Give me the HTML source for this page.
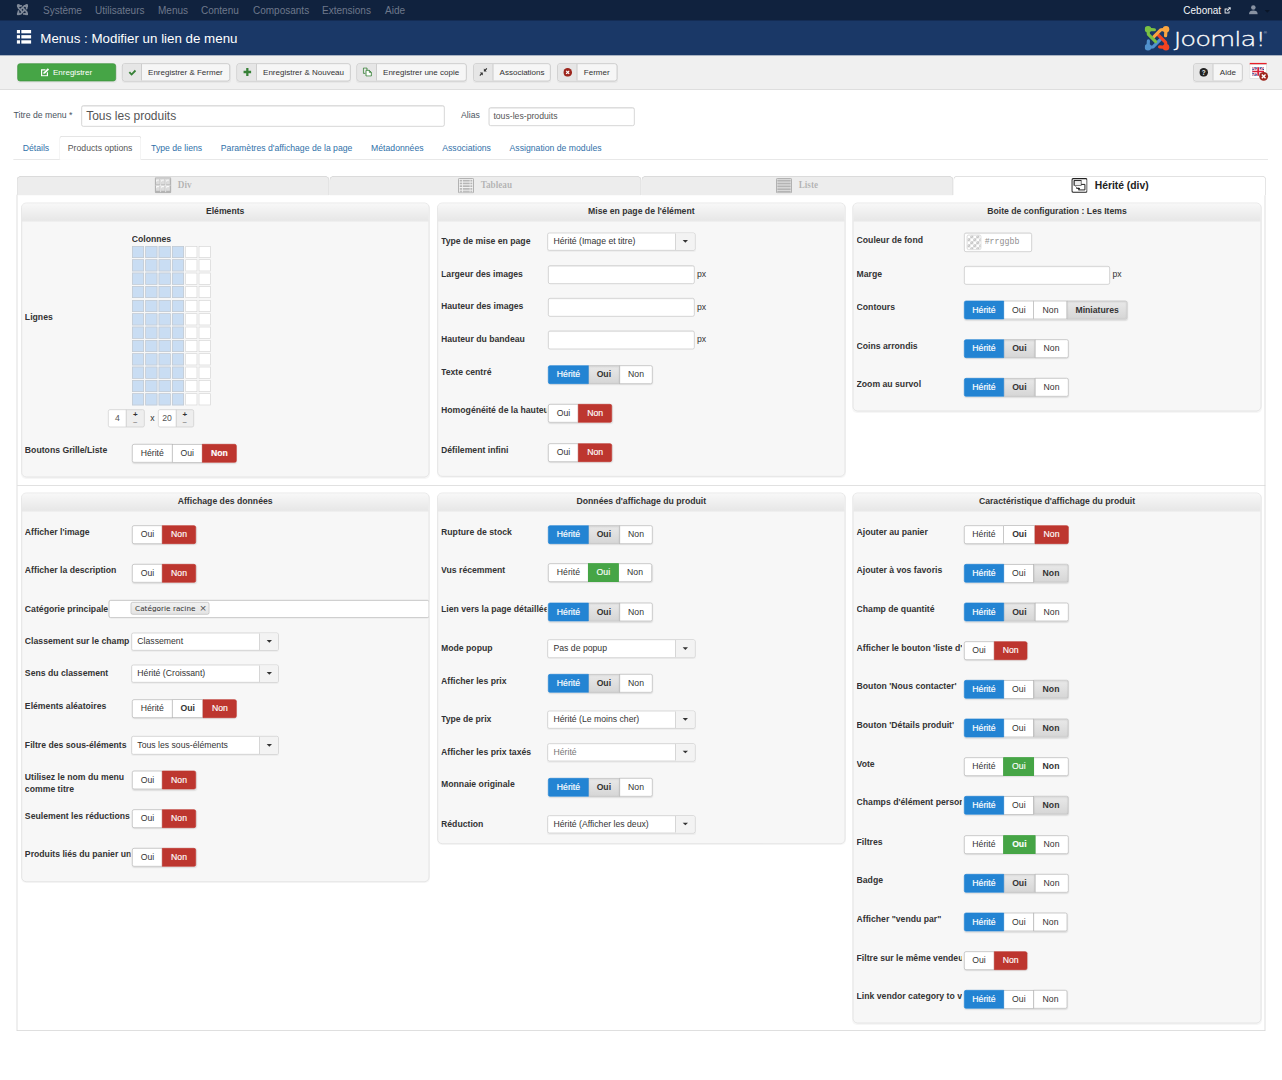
<!DOCTYPE html>
<html lang="fr"><head><meta charset="utf-8"><title>Menus : Modifier un lien de menu</title>
<style>
*{box-sizing:border-box;margin:0;padding:0}
html,body{width:1282px;height:1080px;overflow:hidden;background:#fff}
body{font-family:"Liberation Sans",Arial,sans-serif;font-size:13px;line-height:18px;color:#333}
#s{position:absolute;left:0;top:0;width:1923px;height:1620px;transform:scale(0.666667);transform-origin:0 0;overflow:hidden;background:#fff}
.abs{position:absolute}
.navbar{position:absolute;left:0;top:0;width:1923px;height:31px;background:#10223e}
.navbar .it{position:absolute;top:6.8px;font-size:15px;line-height:18px;color:#6e788b;white-space:nowrap}
.header{position:absolute;left:0;top:31px;width:1923px;height:52px;background:#1a3867}
.header h1{position:absolute;left:60.5px;top:14px;font-size:20px;line-height:24px;font-weight:normal;color:#fff;white-space:nowrap}
.subhead{position:absolute;left:0;top:83px;width:1923px;height:51.5px;background:#f0f0f0;border-bottom:1px solid #d6d6d6}
.tb{position:absolute;top:12.3px;height:27.2px;border:1px solid #bcbcbc;border-radius:4px;background:#f6f6f6;font-size:12px;line-height:25.2px;color:#333;white-space:nowrap;overflow:hidden;box-shadow:0 1px 1px rgba(0,0,0,.04)}
.tb .ic{position:absolute;left:0;top:0;width:29px;height:100%;background:#e6e6e6;border-right:1px solid #c0c0c0}
.tb .tx{position:absolute;left:38.5px;top:0}
.tb svg{position:absolute}
.tb.green{background:#46a546;border-color:#3b8f3b;color:#fff}
label.h{position:absolute;font-size:13px;line-height:18px;color:#4a5460;white-space:nowrap}
.inp{position:absolute;background:#fff;border:1px solid #c3c3c3;border-radius:3px;box-shadow:inset 0 1px 1px rgba(0,0,0,.075);white-space:nowrap;overflow:hidden;color:#555}
.tabs{position:absolute;left:20px;top:204.3px;width:1882px;height:36px;border-bottom:1px solid #ddd}
.tabs .t{position:absolute;top:0;height:36px;padding:8px 12px 0 12px;border:1px solid transparent;border-radius:4px 4px 0 0;color:#3071a9;font-size:13px;line-height:18px;white-space:nowrap}
.tabs .t.act{border-color:#ddd;border-bottom-color:#fff;background:#fff;color:#555}
.st{position:absolute;top:263.5px;height:29.4px;background:#ededed;border:1px solid #d3d3d3;border-bottom:0;border-radius:7px 7px 0 0;font-family:"Liberation Serif",serif;font-weight:bold;font-size:13.8px;color:#b3b3b3;text-shadow:0 1px 0 #fff;line-height:26.5px;white-space:nowrap}
.st.act{line-height:27px;text-shadow:none;background:#fff;border-color:#d9d9d9;font-family:"Liberation Sans",Arial,sans-serif;font-size:15.5px;color:#222;border-radius:6px 6px 0 0}
.st span{position:absolute;top:-0.6px;transform:scaleY(1.16);transform-origin:50% 55%}
.st.act span{transform:none;top:0}
.st svg{position:absolute}
.box{position:absolute;left:25.3px;top:292.4px;width:1873px;height:1253.2px;border:1px solid #d0d0d0;border-top:0;background:#fff}
.hr{position:absolute;left:26px;top:727.9px;width:1872px;height:1px;background:#d2d2d2}
.pn{position:absolute;width:612px;background:#f7f7f7;border:1px solid #dcdcdc;border-radius:7.5px;overflow:hidden;box-shadow:0 1px 1px rgba(0,0,0,.04)}
.pn .hd{position:absolute;left:0;top:0;right:0;height:27.5px;background:linear-gradient(#f8f8f8,#e7e7e7);border-bottom:1px solid #e0e0e0;text-align:center;font-weight:bold;font-size:13px;line-height:24.8px;color:#333}
.lb{position:absolute;left:4.8px;width:158.7px;font-weight:bold;font-size:13px;line-height:18px;color:#333;white-space:nowrap;overflow:hidden}
.lb.w{white-space:normal;width:156px}
.bg{position:absolute;left:165.5px;height:28px;white-space:nowrap;font-size:0;border-radius:4px;box-shadow:0 1px 2px rgba(0,0,0,.1)}
.bg b,.bg i{position:relative;display:inline-block;height:28px;border:1px solid #b3b3b3;margin-left:-1px;background:#fff;font-size:13px;line-height:26px;text-align:center;color:#333;font-style:normal;font-weight:normal;vertical-align:top}
.bg b{font-weight:bold}
.bg :first-child{margin-left:0;border-radius:3px 0 0 3px}
.bg :last-child{border-radius:0 3px 3px 0}
.bg .H{width:60.7px}.bg .O{width:46.2px}.bg .N{width:50.8px}.bg .M{width:91px}
.bg b.O{width:47.7px}.bg b.N{width:52.3px}
.bg .blue{z-index:2;background:#2384d3;border-color:#2384d3;color:#fff;-webkit-text-stroke:0.25px #fff}
.bg .red{z-index:2;background:#bd362f;border-color:#bd362f;color:#fff;-webkit-text-stroke:0.2px #fff}
.bg .grn{z-index:2;background:#46a546;border-color:#46a546;color:#fff;-webkit-text-stroke:0.2px #fff}
.bg .gry{z-index:1;background:linear-gradient(#e9e9e9,#d6d6d6);border-color:#bbb;box-shadow:inset 0 1px 3px rgba(0,0,0,.12)}
.sel{position:absolute;left:164.7px;width:221.2px;height:27.4px;background:#fff;border:1px solid #c6c6c6;border-radius:3px;font-size:13px;line-height:25.4px;color:#333;white-space:nowrap;overflow:hidden;box-shadow:0 1px 1px rgba(0,0,0,.04)}
.sel span{position:absolute;left:7.8px;top:-0.5px}
.sel i{position:absolute;right:0;top:0;width:28.6px;height:100%;background:#f3f3f3;border-left:1px solid #c6c6c6}
.sel i:after{content:"";position:absolute;left:9.8px;top:10.6px;border:4.2px solid transparent;border-top:4.6px solid #333;border-bottom:0}
.ti{left:164.8px;width:220.2px;height:28px}
.px{position:absolute;left:388.6px;font-size:13px;line-height:18px;color:#333}

.grid{position:absolute;width:120px;height:242px}
.grid .c{position:absolute;width:18px;height:18px;background:#fff;border:1px solid #d4d4d4}
.grid .c.b{background:#c9ddf3;border-color:#c3c8ce}
.cnt{position:absolute;width:54.7px;height:27.4px}
.cnt .cv{position:absolute;left:0;top:0;width:28px;height:27.4px;background:#fff;border:1px solid #ccc;border-radius:3px 0 0 3px;text-align:center;font-size:13px;line-height:25px;color:#555}
.cnt .cb{position:absolute;left:27px;top:0;width:27.7px;height:27.4px;background:#eee;border:1px solid #ccc;border-radius:0 3px 3px 0;font-size:12px;color:#333;text-align:center}
.cnt .pl{position:absolute;left:0;right:0;top:-1.7px;line-height:16px;font-weight:bold}
.cnt .mi{position:absolute;left:0;right:0;top:10.6px;line-height:16px;color:#777}
.chk{position:absolute;left:2.5px;top:2.5px;width:22.5px;height:22.5px;border-radius:3px;background-color:#fff;background-image:linear-gradient(45deg,#c6c6c6 25%,transparent 25%,transparent 75%,#c6c6c6 75%),linear-gradient(45deg,#c6c6c6 25%,transparent 25%,transparent 75%,#c6c6c6 75%);background-size:9px 9px;background-position:0 0,4.5px 4.5px;border:1px solid #d2d2d2}
.mono{position:absolute;left:30px;top:4px;font-family:"Liberation Mono","DejaVu Sans Mono",monospace;font-size:12.4px;line-height:18px;color:#8f8f8f}
.tag{position:absolute;left:34px;top:2.5px;height:19px;padding:0 19.5px 0 5.5px;background:linear-gradient(#f1f1f1,#e4e4e4);border:1px solid #b4b4b4;border-radius:3px;font-family:"DejaVu Sans",Verdana,sans-serif;font-size:10.95px;line-height:17px;color:#333}
.tag em{position:absolute;right:3.2px;top:-0.3px;font-style:normal;font-size:17px;color:#555;font-family:"Liberation Sans",sans-serif}
</style></head>
<body><div id="s">
<div class="abs" style="left:0;top:0;width:1923px;height:84px;background:#1a3867"></div><div class="navbar"><svg class="abs" style="left:24.6px;top:5.8px" width="17.6" height="17.6" viewBox="0 0 37 37"><g fill="none" stroke="#808a99" stroke-linecap="round" stroke-linejoin="round" stroke-width="5.4"><path d="M5 5.2 L5.6 12.6 L16.4 23.4 M5 5 L14.6 5.6" transform="rotate(270 18.5 18.5)"/><path d="M5 5.2 L5.6 12.6 L16.4 23.4 M5 5 L14.6 5.6" transform="rotate(180 18.5 18.5)"/><path d="M5 5.2 L5.6 12.6 L16.4 23.4 M5 5 L14.6 5.6" transform="rotate(90 18.5 18.5)"/><path d="M5 5.2 L5.6 12.6 L16.4 23.4 M5 5 L14.6 5.6"/></g><g fill="#808a99"><circle cx="5.4" cy="5.4" r="5.4"/><circle cx="31.6" cy="5.4" r="5.4"/><circle cx="31.6" cy="31.6" r="5.4"/><circle cx="5.4" cy="31.6" r="5.4"/></g></svg><span class="it" style="left:64.5px">Système</span><span class="it" style="left:142.5px">Utilisateurs</span><span class="it" style="left:237px">Menus</span><span class="it" style="left:301.5px">Contenu</span><span class="it" style="left:379.5px">Composants</span><span class="it" style="left:483px">Extensions</span><span class="it" style="left:577.5px">Aide</span><span class="it" style="left:1775px;color:#f4f6f8">Cebonat</span><svg class="abs" style="left:1836px;top:9.6px" width="11" height="11" viewBox="0 0 12 12"><path d="M1 3h5v1.6H2.6v5h5V7H9v4H1z" fill="#e3e6ea"/><path d="M6.5 1H11v4.5L9.4 3.9 6 7.3 4.7 6 8.1 2.6z" fill="#e3e6ea"/></svg><svg class="abs" style="left:1873px;top:7px" width="14" height="15" viewBox="0 0 14 15"><circle cx="7" cy="4.2" r="3.4" fill="#8892a2"/><path d="M0.5 14.5c0-4 2.5-5.6 6.5-5.6s6.5 1.6 6.5 5.6z" fill="#8892a2"/></svg><div class="abs" style="left:1897px;top:14.5px;border:4px solid transparent;border-top:4.5px solid #0a1628;border-bottom:0"></div></div>
<div class="header"><svg class="abs" style="left:25px;top:14px" width="22" height="21" viewBox="0 0 22 21"><g fill="#fff"><rect x="0" y="0" width="5" height="5"/><rect x="7" y="0" width="15" height="5"/><rect x="0" y="7.7" width="5" height="5"/><rect x="7" y="7.7" width="15" height="5"/><rect x="0" y="15.4" width="5" height="5"/><rect x="7" y="15.4" width="15" height="5"/></g></svg><h1>Menus : Modifier un lien de menu</h1><svg class="abs" style="left:1717px;top:7.6px" width="190" height="40" viewBox="0 0 190 40">
<g fill="none" stroke-linecap="round" stroke-linejoin="round" stroke-width="4.8">
<g stroke="#5091cd"><path id="jp" d="M5 5.2 L5.6 12.6 L16.4 23.4 M5 5 L14.6 5.6" transform="rotate(270 18.5 18.5)"/></g>
<g stroke="#f44321"><path d="M5 5.2 L5.6 12.6 L16.4 23.4 M5 5 L14.6 5.6" transform="rotate(180 18.5 18.5)"/></g>
<g stroke="#f9a541"><path d="M5 5.2 L5.6 12.6 L16.4 23.4 M5 5 L14.6 5.6" transform="rotate(90 18.5 18.5)"/></g>
<g stroke="#7ac143"><path d="M5 5.2 L5.6 12.6 L16.4 23.4 M5 5 L14.6 5.6"/></g>
</g>
<circle cx="5" cy="5" r="4.9" fill="#7ac143"/><circle cx="32" cy="5" r="4.9" fill="#f9a541"/><circle cx="32" cy="32" r="4.9" fill="#f44321"/><circle cx="5" cy="32" r="4.9" fill="#5091cd"/>
<text x="0" y="0" transform="translate(43.6 29.9) scale(1.33 1)" letter-spacing="-1.15" font-family="'DejaVu Sans Light','DejaVu Sans',sans-serif" font-weight="200" font-size="29.3" fill="#fff" stroke="#fff" stroke-width="0.4">Joomla!</text>
<text x="178.5" y="12.5" font-family="'Liberation Sans',sans-serif" font-size="6.5" fill="#c5cede">®</text>
</svg></div>
<div class="subhead"><div class="tb green" style="left:25.5px;width:148px"><svg style="left:34.5px;top:6.2px" width="13" height="13" viewBox="0 0 13 13"><path d="M0.5 2h7.2L6 3.8H2.3v6.9h6.9V7.6L11 5.8v6.7H0.5z" fill="#fff"/><path d="M10.6 0.3l2.1 2.1-6 6-2.7.6.6-2.7z" fill="#fff"/></svg><span class="tx" style="left:53px">Enregistrer</span></div><div class="tb" style="left:182.6px;width:162px"><span class="ic"></span><svg style="left:8px;top:6.5px" width="13" height="12" viewBox="0 0 13 12"><path d="M1 6.3l2-2 2.4 2.4L10.2 1.8l2 2L5.4 10.8z" fill="#378137"/></svg><span class="tx">Enregistrer &amp; Fermer</span></div><div class="tb" style="left:355.1px;width:170.7px"><span class="ic"></span><svg style="left:8.5px;top:6px" width="12" height="12" viewBox="0 0 12 12"><path d="M4.3 0h3.4v4.3H12v3.4H7.7V12H4.3V7.7H0V4.3h4.3z" fill="#378137"/></svg><span class="tx">Enregistrer &amp; Nouveau</span></div><div class="tb" style="left:535.1px;width:164.7px"><span class="ic"></span><svg style="left:8px;top:5px" width="14" height="14" viewBox="0 0 14 14"><g fill="none" stroke="#378137" stroke-width="1.3"><path d="M1 1h5.5v3M1 1v8h3"/><path d="M5 4.5h5l3 3V13H5z" fill="#fff"/><path d="M10 4.5v3h3"/></g></svg><span class="tx">Enregistrer une copie</span></div><div class="tb" style="left:709.9px;width:116.2px"><span class="ic"></span><svg style="left:8.5px;top:6px" width="12" height="12" viewBox="0 0 12 12"><g fill="#333"><path d="M12 1.2L9.6 3.6l1.6 1.6H6.8V.8l1.6 1.6L10.8 0z"/><path d="M0 10.8l2.4-2.4L.8 6.8h4.4v4.4L3.6 9.6 1.2 12z"/></g></svg><span class="tx">Associations</span></div><div class="tb" style="left:836.25px;width:89.25px"><span class="ic"></span><svg style="left:8px;top:5.5px" width="13" height="13" viewBox="0 0 13 13"><circle cx="6.5" cy="6.5" r="6.5" fill="#9d261d"/><path d="M3.6 4.8l1.2-1.2 1.7 1.7 1.7-1.7 1.2 1.2-1.7 1.7 1.7 1.7-1.2 1.2-1.7-1.7-1.7 1.7-1.2-1.2 1.7-1.7z" fill="#fff"/></svg><span class="tx">Fermer</span></div><div class="tb" style="left:1790.25px;width:74.2px"><span class="ic"></span><svg style="left:8px;top:5.5px" width="13" height="13" viewBox="0 0 13 13"><circle cx="6.5" cy="6.5" r="6.5" fill="#222"/><text x="6.5" y="10" text-anchor="middle" font-family="'Liberation Sans',sans-serif" font-weight="bold" font-size="9.5" fill="#eee">?</text></svg><span class="tx">Aide</span></div><svg class="abs" style="left:1873.5px;top:11.2px" width="32" height="32" viewBox="0 0 32 32"><rect x="0.4" y="0" width="25.6" height="3" fill="#e8202a"/><rect x="0.8" y="3" width="24.8" height="21" fill="#fff" stroke="#d4d4d4" stroke-width="0.9"/>
<g><rect x="4.5" y="7" width="17.5" height="12.5" fill="#2b3a8c"/><path d="M4.5 7L22 19.5M22 7L4.5 19.5" stroke="#fff" stroke-width="2.6"/><path d="M4.5 7L22 19.5M22 7L4.5 19.5" stroke="#d8203a" stroke-width="1"/><path d="M13.25 7v12.5M4.5 13.25h17.5" stroke="#fff" stroke-width="4.4"/><path d="M13.25 7v12.5M4.5 13.25h17.5" stroke="#d8203a" stroke-width="2.6"/></g>
<circle cx="21.5" cy="20.5" r="6.6" fill="#9d261d"/><path d="M18.7 17.7l5.6 5.6M24.3 17.7l-5.6 5.6" stroke="#fff" stroke-width="2.1"/></svg></div>
<label class="h" style="left:20.3px;top:163.5px">Titre de menu *</label><div class="inp" style="left:121.7px;top:158px;width:545px;height:32px;font-size:18px;line-height:30px;padding-left:6.5px;color:#555">Tous les produits</div><label class="h" style="left:691.5px;top:163.5px">Alias</label><div class="inp" style="left:732.6px;top:161px;width:219.8px;height:27.6px;font-size:13px;line-height:25.6px;padding-left:6.5px;color:#555">tous-les-produits</div>
<div class="tabs"><div id="tabflow" style="position:absolute;left:1px;top:0;white-space:nowrap;font-size:0"><span class="t" style="position:relative;display:inline-block;margin-right:2px">Détails</span><span class="t act" style="position:relative;display:inline-block;margin-right:2px">Products options</span><span class="t" style="position:relative;display:inline-block;margin-right:2px">Type de liens</span><span class="t" style="position:relative;display:inline-block;margin-right:2px">Paramètres d'affichage de la page</span><span class="t" style="position:relative;display:inline-block;margin-right:2px">Métadonnées</span><span class="t" style="position:relative;display:inline-block;margin-right:2px">Associations</span><span class="t" style="position:relative;display:inline-block;margin-right:2px">Assignation de modules</span></div></div>
<div class="box"></div>
<div class="st" style="left:25.3px;width:468.5px"><svg style="left:206.5px;top:1.9px;margin-left:-1.2px" width="25.2" height="23.9" viewBox="0 0 24 22.6" preserveAspectRatio="none"><rect width="24" height="22.6" rx="2" fill="#b3b3b3"/><g stroke="#f1f1f1" stroke-width="1.1" fill="none"><path d="M1.4 11.3H22.6M8.5 2.4V21M15.7 2.4V21"/><path d="M1.6 2H22.4" stroke-width="0.8"/></g><rect x="2.0" y="2.9" width="5.3" height="7" fill="#dcdcdc"/><path d="M2.2 3.2h4.6l-1.6 1.8-1.2-.6-1.8 2.6z" fill="#fafafa"/><rect x="9.2" y="2.9" width="5.3" height="7" fill="#dcdcdc"/><path d="M9.4 3.2h4.6l-1.6 1.8-1.2-.6-1.8 2.6z" fill="#fafafa"/><rect x="16.4" y="2.9" width="5.3" height="7" fill="#dcdcdc"/><path d="M16.6 3.2h4.6l-1.6 1.8-1.2-.6-1.8 2.6z" fill="#fafafa"/><rect x="2.0" y="12.1" width="5.3" height="7" fill="#dcdcdc"/><path d="M2.2 12.4h4.6l-1.6 1.8-1.2-.6-1.8 2.6z" fill="#fafafa"/><rect x="9.2" y="12.1" width="5.3" height="7" fill="#dcdcdc"/><path d="M9.4 12.4h4.6l-1.6 1.8-1.2-.6-1.8 2.6z" fill="#fafafa"/><rect x="16.4" y="12.1" width="5.3" height="7" fill="#dcdcdc"/><path d="M16.6 12.4h4.6l-1.6 1.8-1.2-.6-1.8 2.6z" fill="#fafafa"/></svg><span style="left:240.5px">Div</span></div><div class="st" style="left:493.5px;width:468.3px"><svg style="left:192.5px;top:2.8px" width="24" height="23" viewBox="0 0 24 23"><rect x="0.7" y="0.7" width="22.6" height="21.6" rx="1.2" fill="#f2f2f2" stroke="#a9a9a9" stroke-width="1.4"/><g fill="#b6b6b6"><rect x="2.6" y="2.8" width="18.8" height="2.5"/><rect x="2.6" y="6.9" width="18.8" height="2.5"/><rect x="2.6" y="11" width="18.8" height="2.5"/><rect x="2.6" y="15.1" width="18.8" height="2.5"/><rect x="2.6" y="19" width="18.8" height="1.8"/></g><g fill="#f2f2f2"><rect x="6.2" y="2.4" width="1.2" height="19"/><rect x="17.6" y="2.4" width="1" height="19"/></g></svg><span style="left:226.5px">Tableau</span></div><div class="st" style="left:961.5px;width:468.3px"><svg style="left:201px;top:2.8px" width="24" height="23" viewBox="0 0 24 23"><rect x="0.7" y="0.7" width="22.6" height="21.6" rx="1.2" fill="#e6e6e6" stroke="#aaa" stroke-width="1.4"/><g fill="#b4b4b4"><rect x="2" y="2.6" width="20" height="2.8"/><rect x="2" y="6.9" width="20" height="2.8"/><rect x="2" y="11.2" width="20" height="2.8"/><rect x="2" y="15.5" width="20" height="2.8"/><rect x="2" y="19.4" width="20" height="1.8"/></g></svg><span style="left:235.5px">Liste</span></div><div class="st act" style="left:1429.5px;width:469px"><svg style="left:176px;top:2.6px" width="24.6" height="22.4" viewBox="0 0 24.6 22.4"><rect x="0.9" y="0.9" width="22.8" height="20.6" rx="2" fill="#fff" stroke="#222" stroke-width="1.8"/><rect x="4.2" y="3.8" width="10.6" height="7.4" fill="#ececec" stroke="#555" stroke-width="1.1"/><path d="M4.2 11.2V3.8H14.8" fill="none" stroke="#222" stroke-width="1.3"/><path d="M14.8 9.6H20.4V17.9H10.5" fill="none" stroke="#222" stroke-width="1.5"/><path d="M6.2 12.2l2.6 3.4h3" fill="none" stroke="#555" stroke-width="1.1"/><circle cx="11.4" cy="16.2" r="1.5" fill="#111"/><path d="M7.4 15.4H11" stroke="#222" stroke-width="1.5"/></svg><span style="left:211.5px">Hérité (div)</span></div>
<div class="hr"></div>
<div class="pn" style="left:31.5px;top:303.75px;width:612.5px;height:412px"><div class="hd">Eléments</div><div class="lb" style="top:162.6px">Lignes</div><div class="lb" style="left:165px;top:44.8px">Colonnes</div><div class="grid" style="left:165.5px;top:64.6px"><i style="left:0.0px;top:0.0px" class="c b"></i><i style="left:20.05px;top:0.0px" class="c b"></i><i style="left:40.1px;top:0.0px" class="c b"></i><i style="left:60.15px;top:0.0px" class="c b"></i><i style="left:80.2px;top:0.0px" class="c"></i><i style="left:100.25px;top:0.0px" class="c"></i><i style="left:0.0px;top:20.05px" class="c b"></i><i style="left:20.05px;top:20.05px" class="c b"></i><i style="left:40.1px;top:20.05px" class="c b"></i><i style="left:60.15px;top:20.05px" class="c b"></i><i style="left:80.2px;top:20.05px" class="c"></i><i style="left:100.25px;top:20.05px" class="c"></i><i style="left:0.0px;top:40.1px" class="c b"></i><i style="left:20.05px;top:40.1px" class="c b"></i><i style="left:40.1px;top:40.1px" class="c b"></i><i style="left:60.15px;top:40.1px" class="c b"></i><i style="left:80.2px;top:40.1px" class="c"></i><i style="left:100.25px;top:40.1px" class="c"></i><i style="left:0.0px;top:60.15px" class="c b"></i><i style="left:20.05px;top:60.15px" class="c b"></i><i style="left:40.1px;top:60.15px" class="c b"></i><i style="left:60.15px;top:60.15px" class="c b"></i><i style="left:80.2px;top:60.15px" class="c"></i><i style="left:100.25px;top:60.15px" class="c"></i><i style="left:0.0px;top:80.2px" class="c b"></i><i style="left:20.05px;top:80.2px" class="c b"></i><i style="left:40.1px;top:80.2px" class="c b"></i><i style="left:60.15px;top:80.2px" class="c b"></i><i style="left:80.2px;top:80.2px" class="c"></i><i style="left:100.25px;top:80.2px" class="c"></i><i style="left:0.0px;top:100.25px" class="c b"></i><i style="left:20.05px;top:100.25px" class="c b"></i><i style="left:40.1px;top:100.25px" class="c b"></i><i style="left:60.15px;top:100.25px" class="c b"></i><i style="left:80.2px;top:100.25px" class="c"></i><i style="left:100.25px;top:100.25px" class="c"></i><i style="left:0.0px;top:120.3px" class="c b"></i><i style="left:20.05px;top:120.3px" class="c b"></i><i style="left:40.1px;top:120.3px" class="c b"></i><i style="left:60.15px;top:120.3px" class="c b"></i><i style="left:80.2px;top:120.3px" class="c"></i><i style="left:100.25px;top:120.3px" class="c"></i><i style="left:0.0px;top:140.35px" class="c b"></i><i style="left:20.05px;top:140.35px" class="c b"></i><i style="left:40.1px;top:140.35px" class="c b"></i><i style="left:60.15px;top:140.35px" class="c b"></i><i style="left:80.2px;top:140.35px" class="c"></i><i style="left:100.25px;top:140.35px" class="c"></i><i style="left:0.0px;top:160.4px" class="c b"></i><i style="left:20.05px;top:160.4px" class="c b"></i><i style="left:40.1px;top:160.4px" class="c b"></i><i style="left:60.15px;top:160.4px" class="c b"></i><i style="left:80.2px;top:160.4px" class="c"></i><i style="left:100.25px;top:160.4px" class="c"></i><i style="left:0.0px;top:180.45px" class="c b"></i><i style="left:20.05px;top:180.45px" class="c b"></i><i style="left:40.1px;top:180.45px" class="c b"></i><i style="left:60.15px;top:180.45px" class="c b"></i><i style="left:80.2px;top:180.45px" class="c"></i><i style="left:100.25px;top:180.45px" class="c"></i><i style="left:0.0px;top:200.5px" class="c b"></i><i style="left:20.05px;top:200.5px" class="c b"></i><i style="left:40.1px;top:200.5px" class="c b"></i><i style="left:60.15px;top:200.5px" class="c b"></i><i style="left:80.2px;top:200.5px" class="c"></i><i style="left:100.25px;top:200.5px" class="c"></i><i style="left:0.0px;top:220.55px" class="c b"></i><i style="left:20.05px;top:220.55px" class="c b"></i><i style="left:40.1px;top:220.55px" class="c b"></i><i style="left:60.15px;top:220.55px" class="c b"></i><i style="left:80.2px;top:220.55px" class="c"></i><i style="left:100.25px;top:220.55px" class="c"></i></div><div class="cnt" style="left:129.8px;top:309.25px"><div class="cv">4</div><div class="cb"><span class="pl">+</span><span class="mi">&minus;</span></div></div><div class="abs" style="left:193px;top:313px;font-size:13px;color:#333">x</div><div class="cnt" style="left:204.1px;top:309.25px"><div class="cv">20</div><div class="cb"><span class="pl">+</span><span class="mi">&minus;</span></div></div><div class="lb" style="top:362.7px">Boutons Grille/Liste</div><div class="bg" style="top:361.6px"><i class="H">Hérité</i><i class="O">Oui</i><b class="N red">Non</b></div></div><div class="pn" style="left:655.75px;top:303.75px;width:612.5px;height:411px"><div class="hd">Mise en page de l'élément</div><div class="lb" style="top:48.2px">Type de mise en page</div><div class="sel" style="top:44px"><span>Hérité (Image et titre)</span><i></i></div><div class="lb" style="top:97.1px">Largeur des images</div><div class="inp ti" style="top:93.5px"></div><div class="px" style="top:97.7px">px</div><div class="lb" style="top:146.2px">Hauteur des images</div><div class="inp ti" style="top:142.6px"></div><div class="px" style="top:146.79999999999998px">px</div><div class="lb" style="top:195.0px">Hauteur du bandeau</div><div class="inp ti" style="top:191.4px"></div><div class="px" style="top:195.6px">px</div><div class="lb" style="top:244.35px">Texte centré</div><div class="bg" style="top:243.25px"><i class="H blue">Hérité</i><b class="O gry">Oui</b><i class="N">Non</i></div><div class="lb" style="top:302.5px">Homogénéité de la hauteur</div><div class="bg" style="top:301.4px"><i class="O">Oui</i><i class="N red">Non</i></div><div class="lb" style="top:361.2px">Défilement infini</div><div class="bg" style="top:360.1px"><i class="O">Oui</i><i class="N red">Non</i></div></div><div class="pn" style="left:1279px;top:303.75px;width:613px;height:313.5px"><div class="hd">Boite de configuration : Les Items</div><div class="lb" style="top:47.4px">Couleur de fond</div><div class="inp" style="left:166px;top:44px;width:102px;height:29px"><div class="chk"></div><span class="mono">#rrggbb</span></div><div class="lb" style="top:98.6px">Marge</div><div class="inp ti" style="left:165.6px;top:94.2px;width:219px"></div><div class="px" style="left:388.6px;top:98.2px">px</div><div class="lb" style="top:147.1px">Contours</div><div class="bg" style="top:146px"><i class="H blue">Hérité</i><i class="O">Oui</i><i class="N">Non</i><b class="M gry">Miniatures</b></div><div class="lb" style="top:205.2px">Coins arrondis</div><div class="bg" style="top:204.1px"><i class="H blue">Hérité</i><b class="O gry">Oui</b><i class="N">Non</i></div><div class="lb" style="top:263.7px">Zoom au survol</div><div class="bg" style="top:262.6px"><i class="H blue">Hérité</i><b class="O gry">Oui</b><i class="N">Non</i></div></div><div class="pn" style="left:31.5px;top:738.75px;width:612.5px;height:584px"><div class="hd">Affichage des données</div><div class="lb" style="top:48.85px">Afficher l'image</div><div class="bg" style="top:47.75px"><i class="O">Oui</i><i class="N red">Non</i></div><div class="lb" style="top:107.0px">Afficher la description</div><div class="bg" style="top:105.9px"><i class="O">Oui</i><i class="N red">Non</i></div><div class="lb" style="top:165px">Catégorie principale</div><div class="inp" style="left:130px;top:160.2px;width:481px;height:27.2px;box-shadow:none;border-color:#ababab"><div class="tag" style="left:32.6px">Catégorie racine<em>&times;</em></div></div><div class="lb" style="top:213.2px">Classement sur le champ</div><div class="sel" style="top:209px"><span>Classement</span><i></i></div><div class="lb" style="top:261.2px">Sens du classement</div><div class="sel" style="top:257px"><span>Hérité (Croissant)</span><i></i></div><div class="lb" style="top:309.85px">Eléments aléatoires</div><div class="bg" style="top:308.75px"><i class="H">Hérité</i><b class="O">Oui</b><i class="N red">Non</i></div><div class="lb" style="top:368.8px">Filtre des sous-éléments</div><div class="sel" style="top:364.6px"><span>Tous les sous-éléments</span><i></i></div><div class="lb w" style="top:417.35px">Utilisez le nom du menu comme titre</div><div class="bg" style="top:416.25px"><i class="O">Oui</i><i class="N red">Non</i></div><div class="lb" style="top:475.6px">Seulement les réductions</div><div class="bg" style="top:474.5px"><i class="O">Oui</i><i class="N red">Non</i></div><div class="lb" style="top:533.7px">Produits liés du panier uniquement</div><div class="bg" style="top:532.6px"><i class="O">Oui</i><i class="N red">Non</i></div></div><div class="pn" style="left:655.75px;top:738.75px;width:612.5px;height:527.65px"><div class="hd">Données d'affichage du produit</div><div class="lb" style="top:48.85px">Rupture de stock</div><div class="bg" style="top:47.75px"><i class="H blue">Hérité</i><b class="O gry">Oui</b><i class="N">Non</i></div><div class="lb" style="top:106.6px">Vus récemment</div><div class="bg" style="top:105.5px"><i class="H">Hérité</i><i class="O grn">Oui</i><i class="N">Non</i></div><div class="lb" style="top:165.1px">Lien vers la page détaillée</div><div class="bg" style="top:164px"><i class="H blue">Hérité</i><b class="O gry">Oui</b><i class="N">Non</i></div><div class="lb" style="top:223.7px">Mode popup</div><div class="sel" style="top:219.5px"><span>Pas de popup</span><i></i></div><div class="lb" style="top:272.75px">Afficher les prix</div><div class="bg" style="top:271.65px"><i class="H blue">Hérité</i><b class="O gry">Oui</b><i class="N">Non</i></div><div class="lb" style="top:330.2px">Type de prix</div><div class="sel" style="top:326px"><span>Hérité (Le moins cher)</span><i></i></div><div class="lb" style="top:379.35px">Afficher les prix taxés</div><div class="sel" style="top:375.15px"><span><span style="position:static;color:#777">Hérité</span></span><i></i></div><div class="lb" style="top:428.35px">Monnaie originale</div><div class="bg" style="top:427.25px"><i class="H blue">Hérité</i><b class="O gry">Oui</b><i class="N">Non</i></div><div class="lb" style="top:486.95px">Réduction</div><div class="sel" style="top:482.75px"><span>Hérité (Afficher les deux)</span><i></i></div></div><div class="pn" style="left:1279px;top:738.75px;width:613px;height:796.5px"><div class="hd">Caractéristique d'affichage du produit</div><div class="lb" style="top:48.85px">Ajouter au panier</div><div class="bg" style="top:47.75px"><i class="H">Hérité</i><b class="O">Oui</b><i class="N red">Non</i></div><div class="lb" style="top:106.98px">Ajouter à vos favoris</div><div class="bg" style="top:105.88px"><i class="H blue">Hérité</i><i class="O">Oui</i><b class="N gry">Non</b></div><div class="lb" style="top:165.1px">Champ de quantité</div><div class="bg" style="top:164.0px"><i class="H blue">Hérité</i><b class="O gry">Oui</b><i class="N">Non</i></div><div class="lb" style="top:223.22px">Afficher le bouton 'liste d'attente'</div><div class="bg" style="top:222.12px"><i class="O">Oui</i><i class="N red">Non</i></div><div class="lb" style="top:281.35px">Bouton 'Nous contacter'</div><div class="bg" style="top:280.25px"><i class="H blue">Hérité</i><i class="O">Oui</i><b class="N gry">Non</b></div><div class="lb" style="top:339.48px">Bouton 'Détails produit'</div><div class="bg" style="top:338.38px"><i class="H blue">Hérité</i><i class="O">Oui</i><b class="N gry">Non</b></div><div class="lb" style="top:397.6px">Vote</div><div class="bg" style="top:396.5px"><i class="H">Hérité</i><i class="O grn">Oui</i><b class="N">Non</b></div><div class="lb" style="top:455.72px">Champs d'élément personnalisés</div><div class="bg" style="top:454.62px"><i class="H blue">Hérité</i><i class="O">Oui</i><b class="N gry">Non</b></div><div class="lb" style="top:513.85px">Filtres</div><div class="bg" style="top:512.75px"><i class="H">Hérité</i><b class="O grn">Oui</b><i class="N">Non</i></div><div class="lb" style="top:571.98px">Badge</div><div class="bg" style="top:570.88px"><i class="H blue">Hérité</i><b class="O gry">Oui</b><i class="N">Non</i></div><div class="lb" style="top:630.1px">Afficher "vendu par"</div><div class="bg" style="top:629.0px"><i class="H blue">Hérité</i><i class="O">Oui</i><i class="N">Non</i></div><div class="lb" style="top:688.22px">Filtre sur le même vendeur</div><div class="bg" style="top:687.12px"><i class="O">Oui</i><i class="N red">Non</i></div><div class="lb" style="top:746.35px">Link vendor category to vendor page</div><div class="bg" style="top:745.25px"><i class="H blue">Hérité</i><i class="O">Oui</i><i class="N">Non</i></div></div>
</div></body></html>
